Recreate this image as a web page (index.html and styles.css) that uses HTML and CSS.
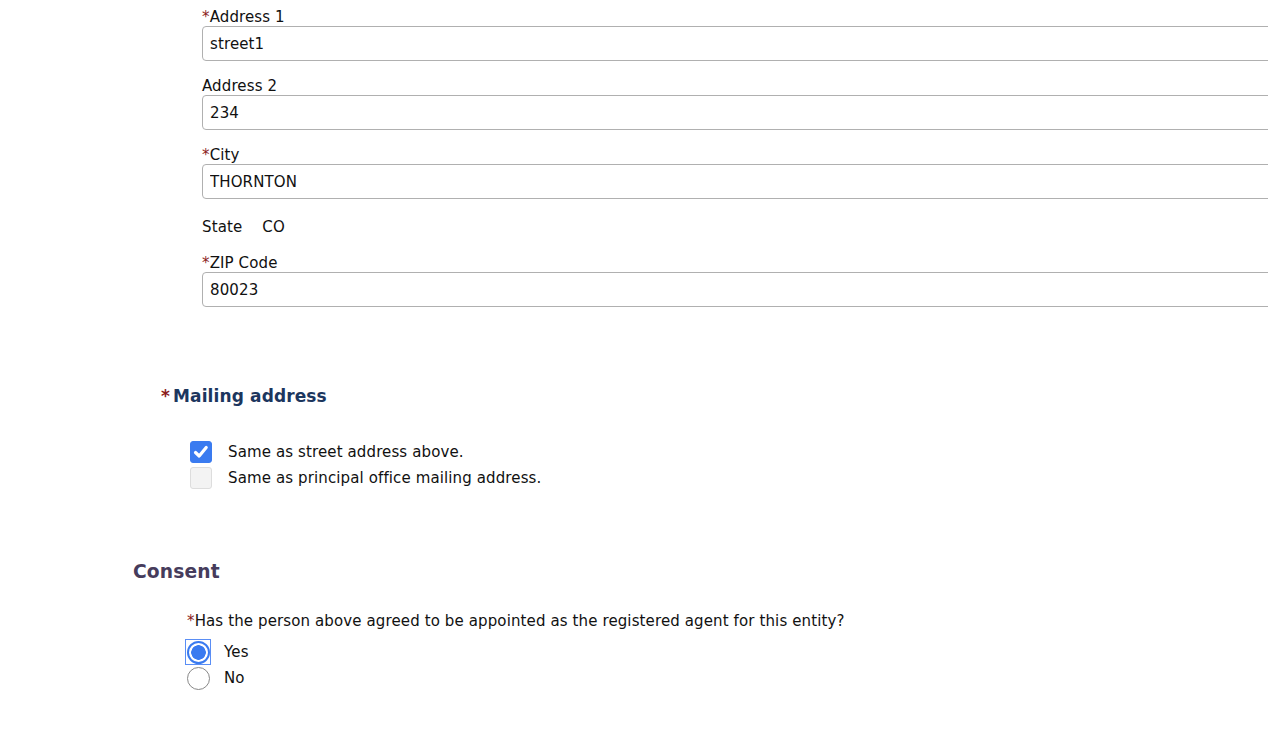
FILE: index.html
```html
<!DOCTYPE html>
<html>
<head>
  <title>Registered Agent</title>
  <link rel="stylesheet" href="styles.css">
</head>
<body>
  <div class="page">
    <div class="address-fields">
      <div class="field">
        <label for="address1"><span class="req">*</span>Address 1</label>
        <input type="text" id="address1" value="street1">
      </div>
      <div class="field">
        <label for="address2">Address 2</label>
        <input type="text" id="address2" value="234">
      </div>
      <div class="field">
        <label for="city"><span class="req">*</span>City</label>
        <input type="text" id="city" value="THORNTON">
      </div>
      <div class="state-row">
        <span>State</span>
        <span>CO</span>
      </div>
      <div class="field">
        <label for="zip"><span class="req">*</span>ZIP Code</label>
        <input type="text" id="zip" value="80023">
      </div>
    </div>

    <h3 class="mailing-title"><span class="req star">*</span>Mailing address</h3>
    <div class="check-list">
      <label class="check-item">
        <span class="box checked">
          <svg width="20" height="20" viewBox="0 0 20 20"><path d="M4.5 10.5 L8.2 14 L15.2 5.5" fill="none" stroke="#fff" stroke-width="3.2" stroke-linecap="round" stroke-linejoin="round"/></svg>
        </span>
        Same as street address above.
      </label>
      <label class="check-item">
        <span class="box"></span>
        Same as principal office mailing address.
      </label>
    </div>

    <h2 class="consent-title">Consent</h2>
    <div class="consent">
      <p class="question"><span class="req">*</span>Has the person above agreed to be appointed as the registered agent for this entity?</p>
      <label class="radio-item">
        <span class="radio-focus"><span class="radio checked"></span></span>
        Yes
      </label>
      <label class="radio-item">
        <span class="radio-focus plain"><span class="radio"></span></span>
        No
      </label>
    </div>
  </div>
</body>
</html>
```

FILE: styles.css
```css
body {
  margin: 0;
  font-family: "DejaVu Sans", Verdana, sans-serif;
  font-size: 15px;
  letter-spacing: 0.12px;
  color: #111;
  background-color: #fff;
  overflow: hidden;
}

.page {
  padding-left: 133px;
}

.req {
  color: #8b1c1c;
}

.address-fields {
  padding-left: 69px;
}

.field {
  margin-bottom: 8px;
}

.field label {
  display: block;
  line-height: 18px;
  padding-top: 8px;
}

.field input {
  display: block;
  box-sizing: border-box;
  width: 1100px;
  height: 35px;
  padding: 0 7px;
  font-family: inherit;
  font-size: 15px;
  letter-spacing: 0.12px;
  color: #111;
  border: 1px solid #b0b0b0;
  border-radius: 4px;
  margin: 0;
}

.state-row {
  display: flex;
  gap: 20px;
  line-height: 18px;
  padding-top: 11px;
  padding-bottom: 10px;
}

.mailing-title {
  margin: 0;
  padding: 70px 0 0 28px;
  font-size: 17px;
  line-height: 22px;
  color: #1c365e;
  font-weight: bold;
}

.star {
  margin-right: 3px;
}

.check-list {
  padding: 32px 0 0 57px;
}

.check-item {
  display: flex;
  align-items: center;
  gap: 16px;
  height: 26px;
}

.box {
  box-sizing: border-box;
  width: 22px;
  height: 22px;
  border-radius: 3px;
  border: 1px solid #ddd;
  background-color: #f3f3f3;
  display: flex;
  align-items: center;
  justify-content: center;
}

.box.checked {
  background-color: #3a7bf0;
  border-color: #3a7bf0;
}

.consent-title {
  margin: 0;
  padding-top: 70px;
  font-size: 18.7px;
  line-height: 22px;
  color: #463c5c;
  font-weight: bold;
}

.consent {
  padding-left: 54px;
}

.question {
  margin: 0;
  padding-top: 28px;
  line-height: 20px;
  margin-bottom: 8px;
}

.radio-item {
  display: flex;
  align-items: center;
  gap: 13px;
  height: 26px;
  margin-left: -2px;
}

.radio-focus {
  box-sizing: border-box;
  width: 26px;
  height: 26px;
  border: 1px solid #5a8ef5;
  display: flex;
  align-items: center;
  justify-content: center;
}

.radio-focus.plain {
  border-color: transparent;
}

.radio {
  box-sizing: border-box;
  width: 23px;
  height: 23px;
  border-radius: 50%;
  border: 1px solid #888;
  background-color: #fff;
}

.radio.checked {
  border: 2px solid #3a7bf0;
  background: radial-gradient(circle, #3a7bf0 0 7px, #fff 7.5px);
}
```
